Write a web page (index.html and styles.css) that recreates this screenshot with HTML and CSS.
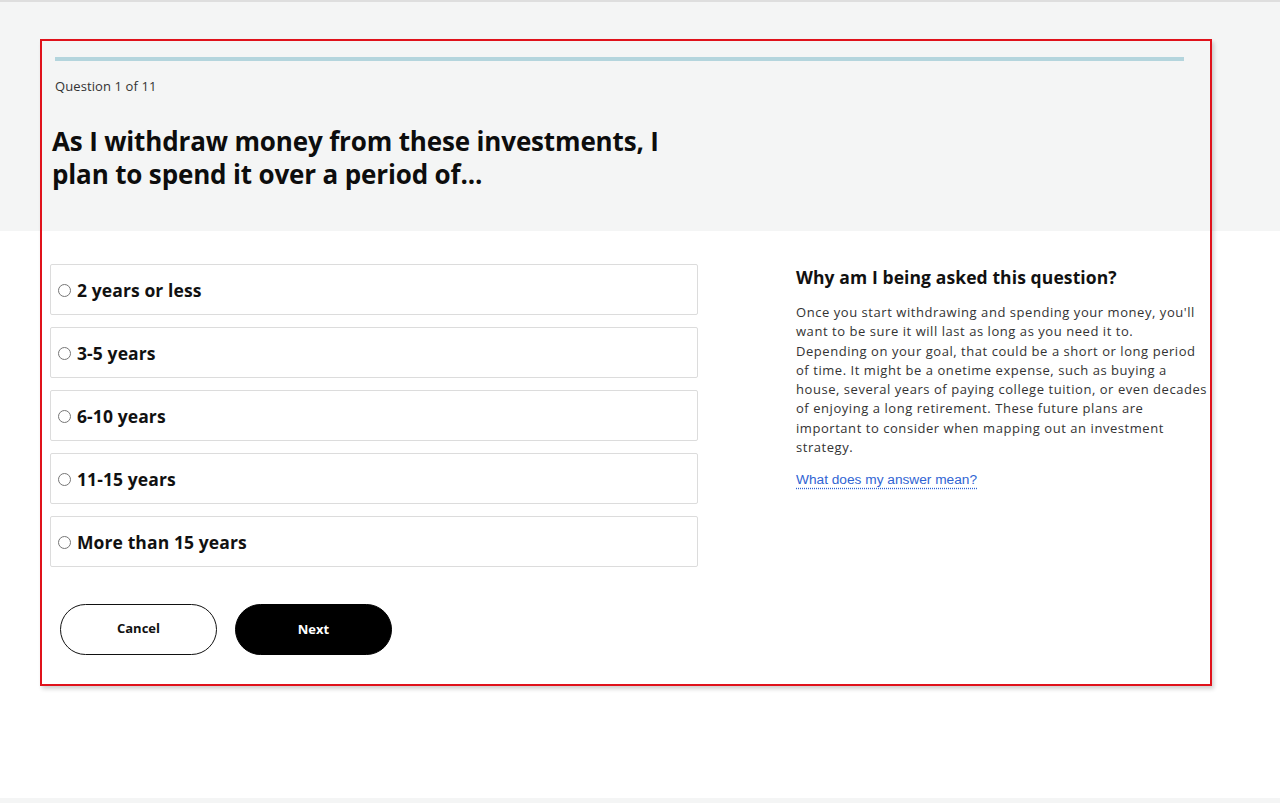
FILE: index.html
```html
<!DOCTYPE html>
<html lang="en">
<head>
<meta charset="utf-8">
<title>Question 1 of 11</title>
<link rel="stylesheet" href="styles.css">
</head>
<body>
<div class="topline"></div>
<main class="frame">
  <section class="intro">
    <div class="progress"></div>
    <p class="counter">Question 1 of 11</p>
    <h1 class="question">As I withdraw money from these investments, I plan to spend it over a period of...</h1>
  </section>
  <section class="content">
    <div class="answers">
      <form class="options">
        <label class="option"><input type="radio" name="period"><span>2 years or less</span></label>
        <label class="option"><input type="radio" name="period"><span>3-5 years</span></label>
        <label class="option"><input type="radio" name="period"><span>6-10 years</span></label>
        <label class="option"><input type="radio" name="period"><span>11-15 years</span></label>
        <label class="option"><input type="radio" name="period"><span>More than 15 years</span></label>
      </form>
      <div class="actions">
        <button class="btn btn-outline" type="button">Cancel</button>
        <button class="btn btn-solid" type="button">Next</button>
      </div>
    </div>
    <aside class="help">
      <h2 class="help-title">Why am I being asked this question?</h2>
      <p class="help-text">Once you start withdrawing and spending your money, you'll want to be sure it will last as long as you need it to. Depending on your goal, that could be a short or long period of time. It might be a onetime expense, such as buying a house, several years of paying college tuition, or even decades of enjoying a long retirement. These future plans are important to consider when mapping out an investment strategy.</p>
      <a class="help-link" href="#">What does my answer mean?</a>
    </aside>
  </section>
</main>
<div class="footer-strip"></div>
</body>
</html>
```
FILE: styles.css
```css
* { box-sizing: border-box; }
html, body { margin: 0; padding: 0; }
body {
  width: 1280px;
  height: 803px;
  overflow: hidden;
  font-family: "Open Sans", "Liberation Sans", sans-serif;
  color: #111;
  background: linear-gradient(#f4f5f5 0, #f4f5f5 231px, #ffffff 231px);
  display: flex;
  flex-direction: column;
}
.topline {
  height: 2px;
  background: #dedede;
  flex: none;
}
.frame {
  margin: 37px 0 0 40px;
  width: 1172px;
  height: 647px;
  border: 2px solid #e0121b;
  box-shadow: 2px 3px 4px rgba(0,0,0,0.18);
  display: flex;
  flex-direction: column;
  flex: none;
}
.intro {
  height: 188px;
  padding: 16px 26px 0 13px;
  flex: none;
}
.progress {
  height: 4px;
  background: #b4d5dd;
}
.counter {
  margin: 16px 0 0 0;
  font-size: 13px;
  line-height: 18px;
  color: #333;
  letter-spacing: 0.1px;
}
.question {
  margin: 30px 0 0 -3px;
  font-size: 26px;
  line-height: 33px;
  font-weight: 700;
  max-width: 640px;
  color: #0d0d0d;
  letter-spacing: -0.15px;
}
.content {
  display: flex;
  padding: 35px 0 0 8px;
  flex: 1;
}
.answers {
  width: 648px;
  flex: none;
}
.options {
  display: flex;
  flex-direction: column;
  gap: 12px;
  margin: 0;
}
.option {
  height: 51px;
  border: 1px solid #dcdcdc;
  border-radius: 2px;
  display: flex;
  align-items: center;
  padding-left: 7px;
  font-size: 17.5px;
  font-weight: 700;
  color: #111;
  letter-spacing: 0.1px;
}
.option input {
  margin: 1px 6px 0 0;
  width: 13px;
  height: 13px;
}
.actions {
  display: flex;
  gap: 18px;
  margin: 37px 0 0 10px;
}
.btn {
  width: 157px;
  height: 51px;
  border-radius: 26px;
  font-family: "Open Sans", "Liberation Sans", sans-serif;
  font-size: 13px;
  font-weight: 700;
  cursor: pointer;
}
.btn-outline {
  background: #fff;
  border: 1.5px solid #111;
  color: #111;
  padding-bottom: 4px;
}
.btn-solid {
  background: #000;
  border: 1.5px solid #000;
  color: #fff;
  padding-bottom: 2px;
}
.help {
  margin-left: 98px;
  width: 412px;
  padding-top: 1px;
}
.help-title {
  margin: 0;
  font-size: 17.5px;
  line-height: 24px;
  font-weight: 700;
  color: #111;
  letter-spacing: 0.1px;
}
.help-text {
  margin: 14px 0 0 0;
  font-size: 13px;
  line-height: 19.3px;
  color: #333;
  letter-spacing: 0.55px;
}
.help-link {
  display: inline-block;
  margin-top: 15px;
  font-family: "Liberation Sans", Arial, sans-serif;
  font-size: 13.7px;
  color: #3064d3;
  text-decoration: underline dotted;
  text-underline-offset: 3px;
}
.footer-strip {
  margin-top: auto;
  height: 5px;
  background: #f4f5f5;
  flex: none;
}
```
